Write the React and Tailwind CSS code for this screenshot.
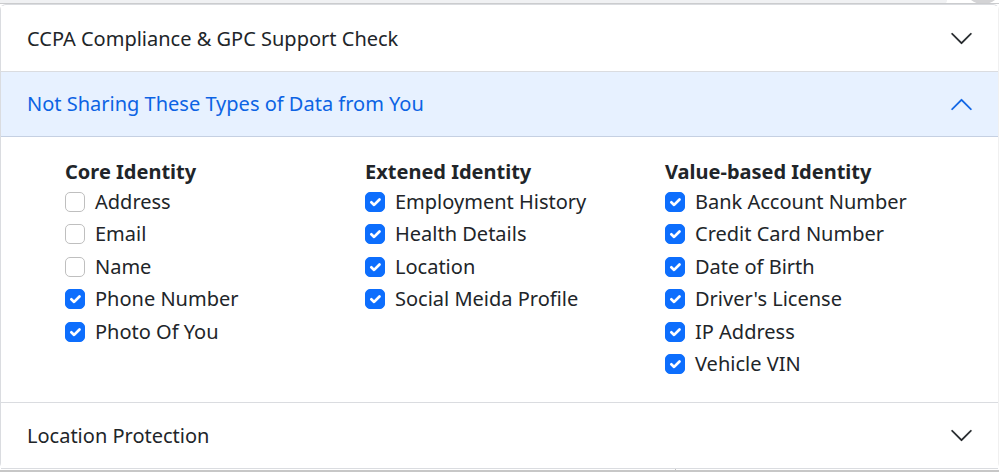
import { useState } from "react";

const groups = [
  {
    title: "Core Identity",
    items: [
      ["Address", false],
      ["Email", false],
      ["Name", false],
      ["Phone Number", true],
      ["Photo Of You", true],
    ],
  },
  {
    title: "Extened Identity",
    items: [
      ["Employment History", true],
      ["Health Details", true],
      ["Location", true],
      ["Social Meida Profile", true],
    ],
  },
  {
    title: "Value-based Identity",
    items: [
      ["Bank Account Number", true],
      ["Credit Card Number", true],
      ["Date of Birth", true],
      ["Driver's License", true],
      ["IP Address", true],
      ["Vehicle VIN", true],
    ],
  },
];

function Chevron({ open }) {
  return (
    <svg
      viewBox="0 0 16 16"
      fill="currentColor"
      stroke="currentColor"
      strokeWidth="0.15"
      aria-hidden="true"
      className={open ? "size-[25px] shrink-0 rotate-180" : "size-[25px] shrink-0"}
    >
      <path
        fillRule="evenodd"
        d="M1.646 4.646a.5.5 0 0 1 .708 0L8 10.293l5.646-5.647a.5.5 0 0 1 .708.708l-6 6a.5.5 0 0 1-.708 0l-6-6a.5.5 0 0 1 0-.708z"
      />
    </svg>
  );
}

function Section({ title, defaultOpen = false, children }) {
  const [open, setOpen] = useState(defaultOpen);
  return (
    <section className="border-b border-[#dadce0]">
      <h2>
        <button
          type="button"
          aria-expanded={open}
          onClick={() => setOpen(!open)}
          className={
            open
              ? "flex h-[65px] w-full items-center justify-between border-b border-[#c5d0e2] bg-[#e7f1ff] pr-6 pl-[26px] text-left text-[#0c63e4]"
              : "flex h-[65px] w-full items-center justify-between bg-white pr-6 pl-[26px] text-left"
          }
        >
          {title}
          <Chevron open={open} />
        </button>
      </h2>
      {open && children}
    </section>
  );
}

function CheckItem({ label, defaultChecked }) {
  return (
    <li className="even:mb-px">
      <label className="flex h-8 w-fit items-center gap-2.5">
        <span className="grid size-5">
          <input
            type="checkbox"
            defaultChecked={defaultChecked}
            className="peer col-start-1 row-start-1 size-5 appearance-none rounded-[5px] border border-[#bfbfbf] bg-white checked:border-[#0d6efd] checked:bg-[#0d6efd]"
          />
          <svg
            viewBox="0 0 20 20"
            fill="none"
            stroke="white"
            strokeWidth="2.7"
            strokeLinecap="round"
            strokeLinejoin="round"
            aria-hidden="true"
            className="pointer-events-none invisible col-start-1 row-start-1 size-5 peer-checked:visible"
          >
            <path d="m6.3 10.3 2.8 2.6 5.4-5.4" />
          </svg>
        </span>
        {label}
      </label>
    </li>
  );
}

export default function App() {
  return (
    <div className="bg-white font-['Noto_Sans','Segoe_UI',sans-serif] text-xl text-[#212529]">
      <div className="flex h-1 justify-end overflow-hidden border-b border-[#cbccce] bg-white">
        <div className="h-1 flex-1 rounded-br-sm bg-[#f0f1f3]" />
        <svg viewBox="0 0 24 4" aria-hidden="true" className="mr-1 ml-6 h-1 w-6 shrink-0">
          <path d="M0 0h24q-5 4-12 4T0 0z" fill="#d3d3d5" />
        </svg>
      </div>
      <main className="rounded-md border border-b-0 border-[#dadce0] border-r-[#f0f0f0] pt-px">
        <Section title="CCPA Compliance & GPC Support Check" />
        <Section title="Not Sharing These Types of Data from You" defaultOpen>
          <div className="grid grid-cols-3 pt-5 pr-[33px] pb-[21px] pl-16">
            {groups.map((group) => (
              <fieldset key={group.title}>
                <legend className="h-[29px] leading-[29px] font-bold">{group.title}</legend>
                <ul>
                  {group.items.map(([label, checked]) => (
                    <CheckItem key={label} label={label} defaultChecked={checked} />
                  ))}
                </ul>
              </fieldset>
            ))}
          </div>
        </Section>
        <Section title="Location Protection" />
      </main>
      <footer className="flex h-[3px] border-b-2 border-[#c7c7c7]">
        <div className="w-[676px] border-r border-[#c0c0c0]" />
      </footer>
    </div>
  );
}
